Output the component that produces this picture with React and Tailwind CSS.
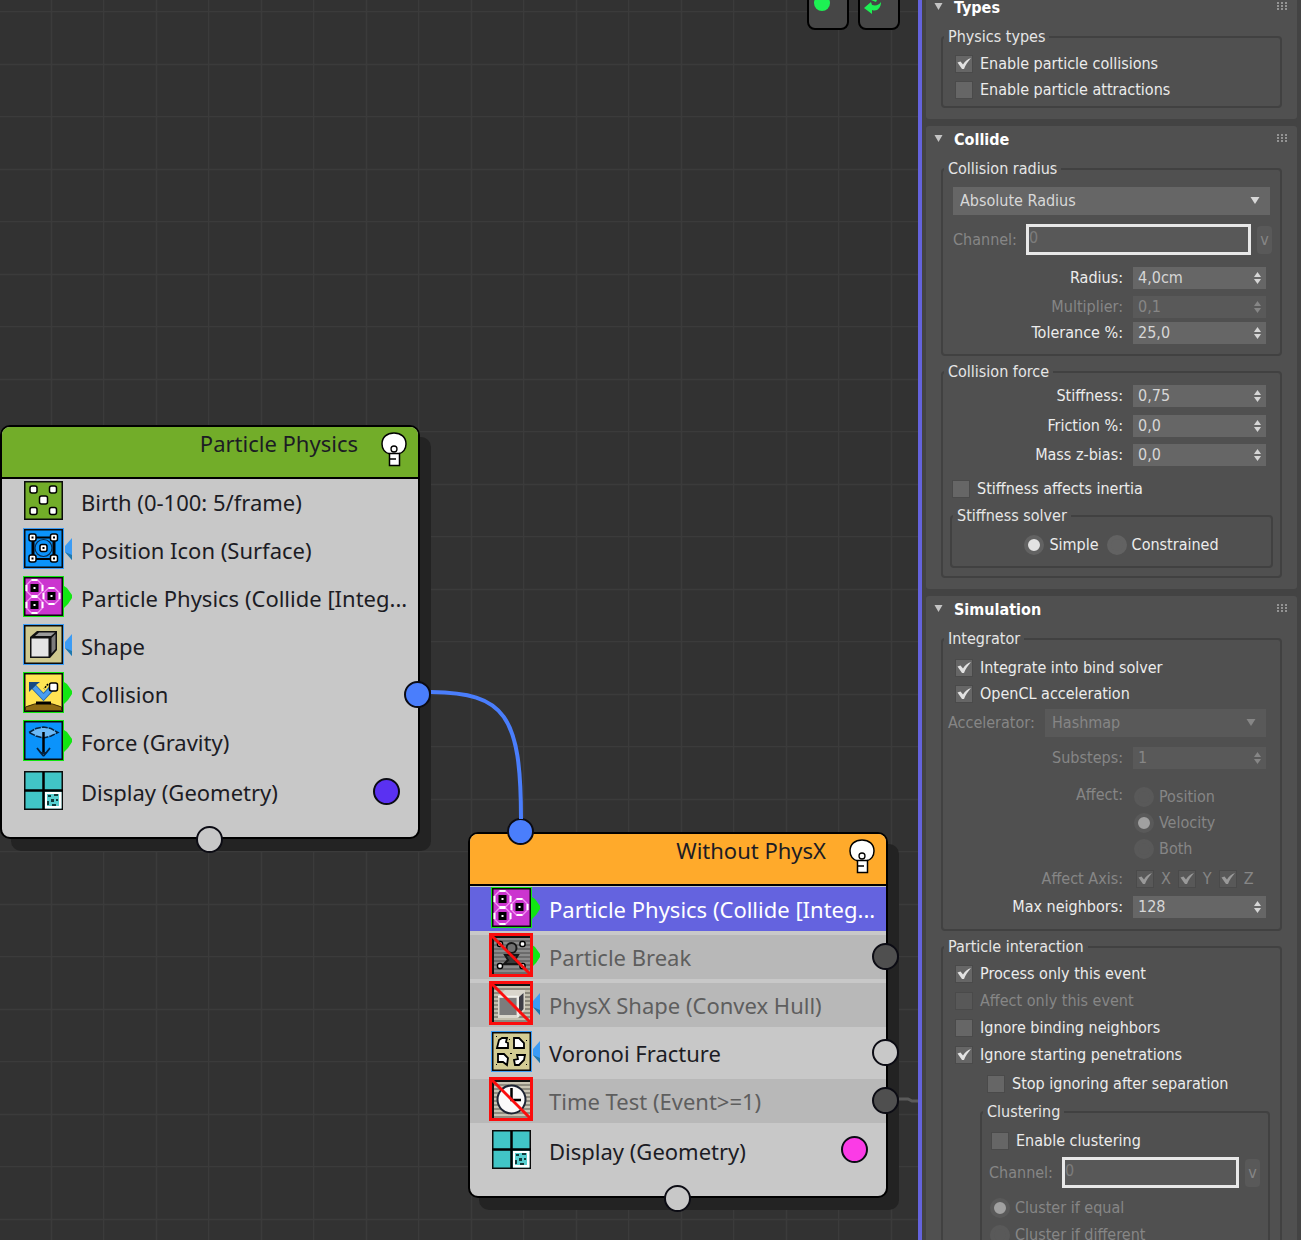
import React, { useId, useState } from 'react';
import clsx from 'clsx';

/* ---------- Operator icons ---------- */

const Tile = ({ fill, edge }) => (
  <>
    {edge && <rect x="1" y="0" width="41" height="41" fill={edge} />}
    <rect x="2" y="1" width="39" height="39" fill="#0b0b0b" />
    <rect x="3.5" y="2.5" width="36" height="36" fill={fill} />
  </>
);

const GreenTab = () => <path d="M42 10 L45 12 L50 19 V22 L46 28 L42 32 Z" fill="#12e612" />;

const BlueTab = () => (
  <>
    <path d="M50 10 V32 L43 24 V18 Z" fill="#3b9cf5" />
    <path d="M43 24 L50 27 V32 Z" fill="#1f78ac" />
  </>
);

const Dot = ({ x, y, s = 3 }) => (
  <rect x={x - s} y={y - s} width={s * 2} height={s * 2} rx="2" fill="#fff" stroke="#000" strokeWidth="1.5" />
);

const Disabled = () => (
  <>
    <rect x="0.5" y="-0.5" width="41" height="41" fill="none" stroke="#fb0d0d" strokeWidth="3" />
    <path d="M1 0 L41 40" stroke="#fb0d0d" strokeWidth="3" />
  </>
);

const Stripes = ({ light, dark }) => (
  <>
    <rect x="1" y="0" width="40" height="40" fill="#111" />
    <rect x="4" y="3" width="36" height="36" fill={light} />
    <path d="M4 6 H40 M4 10 H40 M4 14 H40 M4 18 H40 M4 22 H40 M4 26 H40 M4 30 H40 M4 34 H40 M4 38 H40" stroke={dark} strokeWidth="1" />
  </>
);

const Hexagon = ({ x, y }) => (
  <>
    <path
      d={`M${x - 3} ${y - 8} h6 l5 5 v6 l-5 5 h-6 l-5 -5 v-6 z`}
      fill="#cb35cf"
      stroke="#f08af0"
      strokeWidth="1.5"
    />
    <path
      d={`M${x - 3} ${y - 8} h6 M${x - 3} ${y + 8} h6 M${x - 8} ${y - 3} v6 M${x + 8} ${y - 3} v6`}
      stroke="#fff"
      strokeWidth="2"
    />
    <rect x={x - 4} y={y - 4} width="8" height="8" fill="#000" />
    <rect x={x - 1} y={y - 1} width="2" height="2" fill="#fff" />
  </>
);

const icons = {
  birth: (
    <>
      <Tile fill="#72ad29" />
      <Dot x={11.5} y={9.5} s={3.5} />
      <Dot x={31} y={9.5} s={3.5} />
      <Dot x={21.5} y={20} s={4} />
      <Dot x={11.5} y={31} s={3.5} />
      <Dot x={31} y={31} s={3.5} />
    </>
  ),
  position: (
    <>
      <Tile fill="#0b93fb" edge="#3b9cf5" />
      <BlueTab />
      <path d="M11 9.5 H32 M11 31 H32" stroke="#000" strokeWidth="2" />
      <path d="M11 9.5 V31 M32 9.5 V31" stroke="#000" strokeWidth="3" />
      <circle cx="21.5" cy="20" r="8.5" fill="#0b93fb" stroke="#0a2a4a" strokeWidth="1.2" />
      {[[10.5, 9.5], [32, 9.5], [21.5, 20], [10.5, 30.5], [32, 30.5]].map(([x, y]) => (
        <g key={`${x}-${y}`}>
          <Dot x={x} y={y} s={3.5} />
          <rect x={x - 1} y={y - 1} width="2" height="2" fill="#000" />
        </g>
      ))}
    </>
  ),
  physics: (
    <>
      <Tile fill="#cb35cf" edge="#12e612" />
      <GreenTab />
      <Hexagon x={12.5} y={12} />
      <Hexagon x={12.5} y={29} />
      <Hexagon x={29.5} y={20} />
    </>
  ),
  shape: (
    <>
      <Tile fill="#cfc98f" edge="#3b9cf5" />
      <BlueTab />
      <path d="M8 13 L15 7 H35 V26 L28 34 H8 Z" fill="#111" />
      <path d="M13 12 L17 8.5 H33 L29 12 Z" fill="#9b9b9b" />
      <path d="M29.5 14 L33.5 10 V25 L29.5 29.5 Z" fill="#7b7b7b" />
      <rect x="9.5" y="14.5" width="17" height="18" fill="#e4e4e4" />
    </>
  ),
  collision: (
    <>
      <Tile fill="#ffe453" edge="#12e612" />
      <GreenTab />
      <path d="M3.5 38.5 V35 Q21.5 27 39.5 35 V38.5 Z" fill="#8d6b13" stroke="#3c2c05" strokeWidth="1" />
      <rect x="14" y="29.5" width="15" height="3" fill="#000" />
      <path d="M11 14 L21.5 25 L29 17" stroke="#2b6cae" strokeWidth="6" fill="none" />
      <path d="M12 15 L21.5 25 L29 17" stroke="#4a9df0" strokeWidth="4" fill="none" />
      <path d="M7 10 H18 L14 13 L11 16 L7 20 Z" fill="#174a82" />
      <path d="M26 12 L22 17" stroke="#000" strokeWidth="1.5" strokeDasharray="2 1" />
      <rect x="27.5" y="11" width="8" height="8" rx="2" fill="#fff" stroke="#000" strokeWidth="1.5" />
    </>
  ),
  force: (
    <>
      <Tile fill="#0b93fb" edge="#12e612" />
      <GreenTab />
      <path d="M7 12.5 L14 8.5 L21.5 7 L29 8.5 L36 12.5 L29 16 L21.5 18 L14 16 Z" fill="#6dbaf7" stroke="#06233f" strokeWidth="1.5" strokeDasharray="6 1" />
      <path d="M21.5 12 V34" stroke="#000" strokeWidth="2.5" />
      <path d="M15 28 L19 33 H24 L28 28 M21.5 36 L18 32 M21.5 36 L25 32" stroke="#06233f" strokeWidth="1.8" fill="none" />
    </>
  ),
  display: (
    <>
      <Tile fill="#41c5c6" />
      <path d="M21.5 2 V40 M2 20.5 H41" stroke="#000" strokeWidth="2.5" />
      <rect x="23" y="22" width="16.5" height="16.5" fill="#fff" />
      <rect x="25" y="24" width="12" height="12" fill="#57cfd0" />
      <path d="M26 25 h3 v2 h-3 z M32 24 h4 v2 h-4 z M29 29 h3 v3 h-3 z M34 29 h2 v2 h-2 z M25 31 h2 v4 h-2 z M30 34 h4 v2 h-4 z" fill="#103c3c" />
    </>
  ),
  breakOff: (
    <>
      <Stripes light="#8b8b8b" dark="#4a4a4a" />
      <GreenTab />
      <circle cx="21.5" cy="13" r="5" fill="#707070" stroke="#161616" strokeWidth="2" />
      <path d="M15 20 H28 L25 25 L29 29 H14 L18 25 Z" fill="#3a3a3a" stroke="#161616" strokeWidth="2" />
      <Dot x={10} y={9} s={2.5} />
      <Dot x={32.5} y={9} s={2.5} />
      <Dot x={10} y={31} s={2.5} />
      <Dot x={32.5} y={31} s={2.5} />
      <Disabled />
    </>
  ),
  shapeOff: (
    <>
      <Stripes light="#c3bfae" dark="#55534b" />
      <BlueTab />
      <path d="M8 13 L15 7 H35 V27 L28 35 H8 Z" fill="#d9d6cc" />
      <rect x="9.5" y="15" width="17" height="17" fill="#7c7c7c" />
      <path d="M29 14 L33.5 10 V26 L29 31 Z" fill="#3d3d46" />
      <path d="M8 13.5 H28 V34" fill="none" stroke="#f2f2ee" strokeWidth="1.5" />
      <Disabled />
    </>
  ),
  voronoi: (
    <>
      <Tile fill="#d3cc93" edge="#3b9cf5" />
      <BlueTab />
      <g fill="#fff" stroke="#000" strokeWidth="1.8">
        <path d="M7 17 L9 9 L12 7 H17 L16 11 L18 12 V17 Z" />
        <path d="M24 7 H29 L34 12 V17 H24 Z" />
        <path d="M8 23 H14 L18 27 L17 34 L13 31 L8 31 Z" />
        <path d="M27 24 H35 L34 29 L29 34 H25 L24 29 L28 28 Z" />
      </g>
      <path d="M6 5 h1 v1 h-1z M19 8 h1 v1 h-1z M36 9 h1 v1 h-1z M20 22 h2 v1 h-2z M6 33 h1 v1 h-1z M36 33 h1 v1 h-1z" fill="#000" />
    </>
  ),
  timeOff: (
    <>
      <Stripes light="#c9c5b4" dark="#57554d" />
      <circle cx="21.5" cy="20.5" r="14" fill="#fafafa" stroke="#1d2433" strokeWidth="2" />
      <path d="M21.5 9 V21 H31" fill="none" stroke="#000" strokeWidth="2.5" />
      <Disabled />
    </>
  ),
};

const OperatorIcon = ({ name }) => (
  <svg width="50" height="44" viewBox="0 0 50 44" className="shrink-0 overflow-visible" aria-hidden="true">
    {icons[name]}
  </svg>
);

const Bulb = () => (
  <svg width="28" height="36" viewBox="0 0 28 36" className="shrink-0" aria-hidden="true">
    <path d="M10 23 C5 22 2 18 2 13 C2 6 7 2 14 2 C21 2 26 6 26 13 C26 18 23 22 18 23 Z" fill="#fff" stroke="#000" strokeWidth="1.5" />
    <rect x="9.5" y="22.5" width="10" height="12" fill="#fff" stroke="#000" strokeWidth="1.5" />
    <path d="M10 28 H16" stroke="#000" strokeWidth="1.5" />
    <circle cx="14" cy="18" r="3" fill="#fff" stroke="#000" strokeWidth="1.3" />
  </svg>
);

/* ---------- Event nodes ---------- */

const Port = ({ className }) => (
  <span className={clsx('absolute size-[27px] rounded-full border-2 border-[#0c0c14]', className)} />
);

const EventNode = ({ title, headerClass, operators, className, children }) => (
  <article
    className={clsx(
      'absolute w-[420px] rounded-[10px] border-2 border-black bg-[#c8c8c8] text-[22px] text-[#1c1c24] shadow-[11px_12px_0_#232323]',
      className
    )}
  >
    <header className={clsx('flex h-[52px] items-start justify-end gap-[22px] rounded-t-lg border-b-2 border-black pr-[10px]', headerClass)}>
      <h2 className="leading-8">{title}</h2>
      <div className="pt-1">
        <Bulb />
      </div>
    </header>
    <ul className="flex flex-col gap-1 pt-px pb-[21px]">
      {operators.map((op) => (
        <li
          key={op.label}
          className={clsx(
            'flex h-11 items-center gap-[9px] pl-5 last:h-12',
            op.selected && 'bg-[#6463df] text-white',
            op.off && 'bg-[#b8b8b8] text-[#5e5e5e]'
          )}
        >
          <OperatorIcon name={op.icon} />
          <span className="pt-px whitespace-nowrap">{op.label}</span>
        </li>
      ))}
    </ul>
    {children}
  </article>
);

const physicsOperators = [
  { icon: 'birth', label: 'Birth (0-100: 5/frame)' },
  { icon: 'position', label: 'Position Icon (Surface)' },
  { icon: 'physics', label: 'Particle Physics (Collide [Integ...' },
  { icon: 'shape', label: 'Shape' },
  { icon: 'collision', label: 'Collision' },
  { icon: 'force', label: 'Force (Gravity)' },
  { icon: 'display', label: 'Display (Geometry)' },
];

const withoutPhysxOperators = [
  { icon: 'physics', label: 'Particle Physics (Collide [Integ...', selected: true },
  { icon: 'breakOff', label: 'Particle Break', off: true },
  { icon: 'shapeOff', label: 'PhysX Shape (Convex Hull)', off: true },
  { icon: 'voronoi', label: 'Voronoi Fracture' },
  { icon: 'timeOff', label: 'Time Test (Event>=1)', off: true },
  { icon: 'display', label: 'Display (Geometry)' },
];

const Canvas = () => (
  <main className="relative min-w-0 flex-1 overflow-hidden bg-[#323232] font-['Noto_Sans',sans-serif]">
    <svg className="absolute inset-0 size-full" aria-hidden="true">
      <defs>
        <pattern id="grid" x="-2" y="11" width="105" height="105" patternUnits="userSpaceOnUse">
          <path d="M0 0.5 H105 M0 53.5 H105 M0.5 0 V105 M53.5 0 V105" stroke="#3b3b3b" strokeWidth="1.5" />
        </pattern>
      </defs>
      <rect width="100%" height="100%" fill="url(#grid)" />
    </svg>

    <div className="absolute -top-3 right-[18px] flex gap-[9px]">
      <button type="button" aria-label="Toggle display" className="h-[42px] w-[42px] rounded-lg border-2 border-black bg-[#464646]">
        <svg width="38" height="38" viewBox="0 0 38 38">
          <circle cx="13" cy="13" r="8" fill="#1df053" />
        </svg>
      </button>
      <button type="button" aria-label="Refresh" className="h-[42px] w-[42px] rounded-lg border-2 border-black bg-[#464646]">
        <svg width="38" height="38" viewBox="0 0 38 38">
          <path d="M4 18 L11 12 L12 15 C16 16 19 15 21 12 C21 18 17 22 12 20 L12 24 Z" fill="#1df053" />
          <path d="M11 10 L18 8 L16 12 Z" fill="#1df053" />
        </svg>
      </button>
    </div>

    <EventNode title="Particle Physics" headerClass="bg-[#72ad29]" operators={physicsOperators} className="top-[425px] left-0">
      <Port className="top-[351px] left-[371px] bg-[#5a31f2]" />
      <Port className="top-[254px] left-[402px] bg-[#4a7efc]" />
      <Port className="-bottom-4 left-[194px] bg-[#c8c8c8]" />
    </EventNode>

    <EventNode title="Without PhysX" headerClass="bg-[#ffaa2b]" operators={withoutPhysxOperators} className="top-[832px] left-[468px]">
      <Port className="-top-4 left-[37px] bg-[#4a7efc]" />
      <Port className="top-[109px] left-[402px] bg-[#4f4f4f]" />
      <Port className="top-[205px] left-[402px] bg-[#c8c8c8]" />
      <Port className="top-[253px] left-[402px] bg-[#4f4f4f]" />
      <Port className="top-[302px] left-[371px] bg-[#fb3be6]" />
      <Port className="-bottom-4 left-[194px] bg-[#c8c8c8]" />
    </EventNode>

    {/* Wires */}
    <svg className="pointer-events-none absolute inset-0 size-full" fill="none" aria-hidden="true">
      <path d="M431 692 C505 693 521 715 521 819" stroke="#4a7efc" strokeWidth="4" />
      <path d="M899 1099 H908 L912 1101 H1400" stroke="#5a5a5a" strokeWidth="3" />
    </svg>
  </main>
);

/* ---------- Parameter panel ---------- */

const Section = ({ title, children }) => {
  const [open, setOpen] = useState(true);

  return (
    <section className="rounded-[3px] bg-[#505050] px-[15px] pb-[11px]">
      <header className="flex h-7 items-center justify-between">
        <button
          type="button"
          aria-expanded={open}
          onClick={() => setOpen(!open)}
          className="-ml-[7px] flex items-center gap-[11px] leading-4 font-bold text-white"
        >
          <svg width="9" height="12" viewBox="0 0 9 12" aria-hidden="true">
            <path d="M0.5 1 H8.5 L4.5 8 Z" fill="#c4c4c4" />
          </svg>
          {title}
        </button>
        <svg width="10" height="12" viewBox="0 0 10 12" fill="#949494" className="-mr-[5px]" aria-hidden="true">
          {[0, 3, 6].map((y) => [0, 4, 8].map((x) => <rect key={`${x}-${y}`} x={x} y={y} width="2" height="2" />))}
        </svg>
      </header>
      {open && <div className="flex flex-col gap-[6px] pt-[5px]">{children}</div>}
    </section>
  );
};

const Group = ({ title, className, children }) => (
  <fieldset className={clsx('min-w-0 rounded border-2 border-[#414141]', className)}>
    <legend className="ml-px h-5 px-1 leading-5 text-[#e6e6e6]">{title}</legend>
    {children}
  </fieldset>
);

const Check = ({ label, checked, disabled, className }) => (
  <label className={clsx('flex h-[26px] items-center gap-[7px]', disabled ? 'text-[#868686]' : 'text-[#ececec]', className)}>
    <span className="relative size-[18px] shrink-0">
      <input
        type="checkbox"
        defaultChecked={checked}
        disabled={disabled}
        className="peer block size-[18px] appearance-none border border-[#4a4a4a] bg-[#666] disabled:bg-[#585858]"
      />
      <svg
        viewBox="0 0 18 18"
        className={clsx('pointer-events-none absolute inset-0 hidden size-[18px] peer-checked:block', disabled ? 'text-[#999]' : 'text-[#e2e2e2]')}
        aria-hidden="true"
      >
        <path d="M2.5 7.5 L5.5 6.5 L8 9.5 C10 6.5 12.5 4 16 3 C13 6.5 10.5 10 9 14 H7 Z" fill="currentColor" />
      </svg>
    </span>
    {label}
  </label>
);

const Radio = ({ label, name, checked, disabled, className }) => (
  <label className={clsx('flex h-[26px] items-center gap-[5px]', disabled ? 'text-[#868686]' : 'text-[#ececec]', className)}>
    <input
      type="radio"
      name={name}
      defaultChecked={checked}
      disabled={disabled}
      className="size-5 shrink-0 appearance-none rounded-full border-4 border-[#626262] bg-[#626262] checked:bg-[#e2e2e2] disabled:border-[#595959] disabled:bg-[#595959] disabled:checked:bg-[#a0a0a0]"
    />
    {label}
  </label>
);

const Spinner = ({ label, value, disabled, className }) => {
  const id = useId();

  return (
    <div className={clsx('flex h-[22px] items-center justify-end gap-[10px] pr-[14px]', disabled ? 'text-[#868686]' : 'text-[#ececec]', className)}>
      <label htmlFor={id}>{label}</label>
      <div className={clsx('flex h-full w-[133px] items-center pr-[5px]', disabled ? 'bg-[#595959]' : 'bg-[#666] text-[#d6d6d6]')}>
        <input id={id} type="text" defaultValue={value} disabled={disabled} className="min-w-0 flex-1 bg-transparent pl-[5px] leading-[22px] outline-none" />
        <span className="flex flex-col gap-[2px]">
          <button type="button" aria-label="Increase" disabled={disabled} className="block">
            <svg width="7" height="5" viewBox="0 0 7 5" className="block">
              <path d="M0 5 L3.5 0 L7 5 Z" fill="currentColor" />
            </svg>
          </button>
          <button type="button" aria-label="Decrease" disabled={disabled} className="block">
            <svg width="7" height="5" viewBox="0 0 7 5" className="block">
              <path d="M0 0 H7 L3.5 5 Z" fill="currentColor" />
            </svg>
          </button>
        </span>
      </div>
    </div>
  );
};

const Dropdown = ({ id, label, value, disabled, className }) => (
  <div className={clsx('relative h-7', disabled ? 'text-[#868686]' : 'text-[#d8d8d8]', className)}>
    <select
      id={id}
      aria-label={label}
      disabled={disabled}
      className={clsx('size-full appearance-none px-[7px] opacity-100 outline-none', disabled ? 'bg-[#595959]' : 'bg-[#666]')}
    >
      <option>{value}</option>
    </select>
    <svg width="10" height="7" viewBox="0 0 10 7" className="pointer-events-none absolute top-[10px] right-[10px]" aria-hidden="true">
      <path d="M0.5 0 H9.5 L5 7 Z" fill="currentColor" />
    </svg>
  </div>
);

const Channel = ({ className }) => {
  const id = useId();

  return (
    <div className={clsx('flex items-center text-[#868686]', className)}>
      <label htmlFor={id} className="w-[73px] shrink-0">
        Channel:
      </label>
      <input
        id={id}
        type="text"
        defaultValue="0"
        disabled
        className="h-[31px] min-w-0 flex-1 border-3 border-[#e8e8e8] bg-[#585858] pb-1 text-[#7c7c7c]"
      />
      <button type="button" disabled className="ml-[6px] h-7 w-[15px] shrink-0 rounded-sm bg-[#595959] text-center">
        v
      </button>
    </div>
  );
};

const Panel = () => (
  <aside className="w-[383px] shrink-0 overflow-hidden border-l-4 border-[#6463dd] bg-[#434343] px-1 font-['DejaVu_Sans_Condensed','Noto_Sans',sans-serif] text-[16px] leading-5">
    <div className="-mt-[6px] flex flex-col gap-[7px]">
      <Section title="Types">
        <Group title="Physics types" className="pt-1 pb-[3px]">
          <Check label="Enable particle collisions" checked className="ml-3" />
          <Check label="Enable particle attractions" className="ml-3" />
        </Group>
      </Section>

      <Section title="Collide">
        <Group title="Collision radius" className="pt-2 pb-[10px]">
          <Dropdown label="Collision radius" value="Absolute Radius" className="mx-[10px]" />
          <Channel className="mt-[9px] mr-2 ml-[10px]" />
          <Spinner label="Radius:" value="4,0cm" className="mt-3" />
          <Spinner label="Multiplier:" value="0,1" disabled className="mt-[7px]" />
          <Spinner label="Tolerance %:" value="25,0" className="mt-1" />
        </Group>
        <Group title="Collision force" className="pt-[3px] pb-2">
          <Spinner label="Stiffness:" value="0,75" />
          <Spinner label="Friction %:" value="0,0" className="mt-2" />
          <Spinner label="Mass z-bias:" value="0,0" className="mt-[7px]" />
          <Check label="Stiffness affects inertia" className="mt-[10px] ml-[9px]" />
          <Group title="Stiffness solver" className="mx-[7px] mt-1 pt-[6px] pb-2">
            <div className="flex justify-center gap-2 pl-5">
              <Radio name="solver" label="Simple" checked />
              <Radio name="solver" label="Constrained" />
            </div>
          </Group>
        </Group>
      </Section>

      <Section title="Simulation">
        <Group title="Integrator" className="pt-[6px] pb-[11px]">
          <Check label="Integrate into bind solver" checked className="ml-3" />
          <Check label="OpenCL acceleration" checked className="ml-3" />
          <div className="mt-[2px] flex items-center pr-[14px] pl-[5px] text-[#868686]">
            <label htmlFor="accelerator" className="w-[97px] shrink-0">
              Accelerator:
            </label>
            <Dropdown id="accelerator" value="Hashmap" disabled className="flex-1" />
          </div>
          <Spinner label="Substeps:" value="1" disabled className="mt-[10px]" />
          <div className="mt-[15px] flex justify-end gap-[11px] text-[#868686]">
            <span className="leading-[22px]">Affect:</span>
            <div role="radiogroup" aria-label="Affect" className="w-[146px]">
              <Radio name="affect" label="Position" disabled />
              <Radio name="affect" label="Velocity" disabled checked />
              <Radio name="affect" label="Both" disabled />
            </div>
          </div>
          <div className="mt-1 flex items-center justify-end gap-[13px] text-[#868686]">
            <span>Affect Axis:</span>
            <div className="flex w-[144px] gap-[7px]">
              <Check label="X" checked disabled />
              <Check label="Y" checked disabled />
              <Check label="Z" checked disabled />
            </div>
          </div>
          <Spinner label="Max neighbors:" value="128" className="mt-1" />
        </Group>

        <Group title="Particle interaction" className="pt-1 pb-3">
          <div className="flex flex-col gap-px pl-3">
            <Check label="Process only this event" checked />
            <Check label="Affect only this event" disabled />
            <Check label="Ignore binding neighbors" />
            <Check label="Ignore starting penetrations" checked />
          </div>
          <Check label="Stop ignoring after separation" className="mt-[3px] ml-[44px]" />
          <Group title="Clustering" className="mt-[5px] mr-[10px] ml-[37px] pt-[6px] pb-3">
            <Check label="Enable clustering" className="ml-[9px]" />
            <Channel className="mt-[3px] mr-2 ml-[7px]" />
            <Radio name="cluster" label="Cluster if equal" disabled checked className="mt-[7px] ml-2" />
            <Radio name="cluster" label="Cluster if different" disabled className="mt-px ml-2" />
          </Group>
        </Group>
      </Section>
    </div>
  </aside>
);

const App = () => (
  <div className="flex h-screen overflow-hidden">
    <Canvas />
    <Panel />
  </div>
);

export default App;
